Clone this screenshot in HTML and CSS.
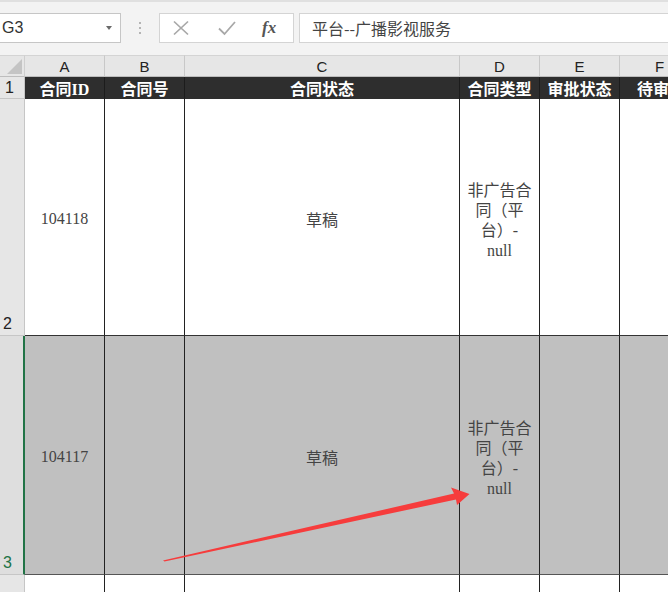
FILE: index.html
```html
<!DOCTYPE html>
<html lang="zh-CN">
<head>
<meta charset="utf-8">
<title>Sheet</title>
<link rel="stylesheet" href="styles.css">
</head>
<body>
<div class="page">
  <div class="toolbar">
    <div class="namebox"><span class="name">G3</span><span class="caret"></span></div>
    <div class="dots"><i></i><i></i><i></i></div>
    <div class="fxbox">
      <svg class="ico-x" width="18" height="16" viewBox="0 0 18 16"><path d="M2 1.5 L16 14.5 M16 1.5 L2 14.5" stroke="#a8a8a8" stroke-width="1.7" fill="none"/></svg>
      <svg class="ico-check" width="20" height="16" viewBox="0 0 20 16"><path d="M2 8.5 L7.5 14 L18 2" stroke="#a8a8a8" stroke-width="1.8" fill="none"/></svg>
      <span class="fx">fx</span>
    </div>
    <div class="formula">平台--广播影视服务</div>
  </div>

  <div class="sheet">
    <div class="corner"><svg width="24" height="22" viewBox="0 0 24 22"><polygon points="22,4 22,19 7,19" fill="#c4c4c4"/></svg></div>
    <div class="colhead">A</div>
    <div class="colhead">B</div>
    <div class="colhead">C</div>
    <div class="colhead">D</div>
    <div class="colhead">E</div>
    <div class="colhead">F</div>

    <div class="rowhead r1">1</div>
    <div class="cell hd">合同ID</div>
    <div class="cell hd">合同号</div>
    <div class="cell hd">合同状态</div>
    <div class="cell hd">合同类型</div>
    <div class="cell hd">审批状态</div>
    <div class="cell hd hd-f">待审批人</div>

    <div class="rowhead big">2</div>
    <div class="cell">104118</div>
    <div class="cell"></div>
    <div class="cell">草稿</div>
    <div class="cell wrap">非广告合<br>同（平<br>台）-<br>null</div>
    <div class="cell"></div>
    <div class="cell"></div>

    <div class="rowhead big sel">3</div>
    <div class="cell gray">104117</div>
    <div class="cell gray"></div>
    <div class="cell gray">草稿</div>
    <div class="cell gray wrap">非广告合<br>同（平<br>台）-<br>null</div>
    <div class="cell gray"></div>
    <div class="cell gray"></div>

    <div class="rowhead"></div>
    <div class="cell"></div>
    <div class="cell"></div>
    <div class="cell"></div>
    <div class="cell"></div>
    <div class="cell"></div>
    <div class="cell"></div>
  </div>

  <svg class="arrow" width="668" height="592" viewBox="0 0 668 592">
    <polygon points="163,560.5 454,493.5 451,487.5 469.5,494 457,505 456,499.5 164.5,561.5" fill="#f63c3c"/>
  </svg>
</div>
</body>
</html>
```

FILE: styles.css
```css
html, body {
  margin: 0;
  padding: 0;
  background: #ffffff;
}

.page {
  position: relative;
  width: 668px;
  height: 592px;
  overflow: hidden;
  font-family: "Liberation Sans", Arial, sans-serif;
}

.toolbar {
  box-sizing: border-box;
  height: 55px;
  background: #f3f3f3;
  border-top: 2px solid #e0e0e0;
  padding-top: 11px;
  display: flex;
  align-items: flex-start;
}

.namebox {
  box-sizing: border-box;
  margin-left: -1px;
  width: 122px;
  height: 30px;
  background: #fff;
  border: 1px solid #c6c6c6;
  display: flex;
  align-items: center;
  padding-left: 2px;
}

.name {
  font-size: 16px;
  color: #333;
}

.caret {
  margin-left: auto;
  margin-right: 8px;
  width: 0;
  height: 0;
  border-left: 3px solid transparent;
  border-right: 3px solid transparent;
  border-top: 4px solid #6a6a6a;
}

.dots {
  width: 38px;
  height: 30px;
  display: flex;
  flex-direction: column;
  align-items: center;
  justify-content: center;
  gap: 3px;
}

.dots i {
  display: block;
  width: 2px;
  height: 2px;
  background: #b4b4b4;
}

.fxbox {
  box-sizing: border-box;
  width: 135px;
  height: 30px;
  background: #fff;
  border: 1px solid #d4d4d4;
  display: flex;
  align-items: center;
}

.ico-x {
  margin-left: 12px;
}

.ico-check {
  margin-left: 27px;
}

.fx {
  margin-left: 25px;
  font-family: "Liberation Serif", "Times New Roman", serif;
  font-style: italic;
  font-weight: bold;
  font-size: 17px;
  color: #555;
}

.formula {
  box-sizing: border-box;
  flex: 1;
  margin-left: 5px;
  margin-right: -3px;
  height: 30px;
  background: #fff;
  border: 1px solid #d4d4d4;
  padding-left: 12px;
  display: flex;
  align-items: center;
  font-family: "Noto Sans CJK SC", sans-serif;
  font-size: 16px;
  color: #444;
}

.sheet {
  display: grid;
  grid-template-columns: 25px 80px 80px 275px 80px 80px 80px;
  grid-template-rows: 22px 22px 237px 239px 40px;
}

.corner {
  box-sizing: border-box;
  background: #e6e6e6;
  border-right: 1px solid #cfcfcf;
  border-bottom: 1px solid #bdbdbd;
  border-top: 1px solid #d4d4d4;
}

.corner svg {
  display: block;
  margin-top: -1px;
}

.colhead {
  box-sizing: border-box;
  background: #e6e6e6;
  border-right: 1px solid #c8c8c8;
  border-top: 1px solid #d4d4d4;
  border-bottom: 1px solid #bdbdbd;
  display: flex;
  align-items: center;
  justify-content: center;
  font-size: 15px;
  color: #222;
  padding-top: 1px;
}

.rowhead {
  box-sizing: border-box;
  background: #e6e6e6;
  border-right: 1px solid #c6c6c6;
  border-bottom: 1px solid #c6c6c6;
  font-size: 16px;
  color: #222;
  padding-left: 5px;
  display: flex;
  align-items: center;
}

.rowhead.big {
  align-items: flex-end;
  padding-bottom: 2px;
  padding-left: 3px;
}

.rowhead.sel {
  background: #dedede;
  color: #217346;
  border-right: 2px solid #217346;
}

.cell {
  box-sizing: border-box;
  border-right: 1px solid #222;
  border-bottom: 1px solid #333;
  display: flex;
  align-items: center;
  justify-content: center;
  text-align: center;
  font-family: "Liberation Serif", "Noto Sans CJK SC", serif;
  font-size: 16px;
  color: #444;
  overflow: hidden;
  white-space: nowrap;
  padding-top: 3px;
}

.cell.hd {
  background: #2e2e2e;
  color: #fff;
  font-weight: bold;
  border-bottom: none;
  border-right-color: #1c1c1c;
  padding-top: 0;
}

.cell.hd-f {
  justify-content: flex-start;
  padding-left: 17px;
}

.cell.wrap {
  line-height: 20px;
  padding-top: 8px;
}

.cell.gray {
  background: #c0c0c0;
  border-bottom: 1px solid #555;
}

.arrow {
  position: absolute;
  left: 0;
  top: 0;
  pointer-events: none;
}
```
